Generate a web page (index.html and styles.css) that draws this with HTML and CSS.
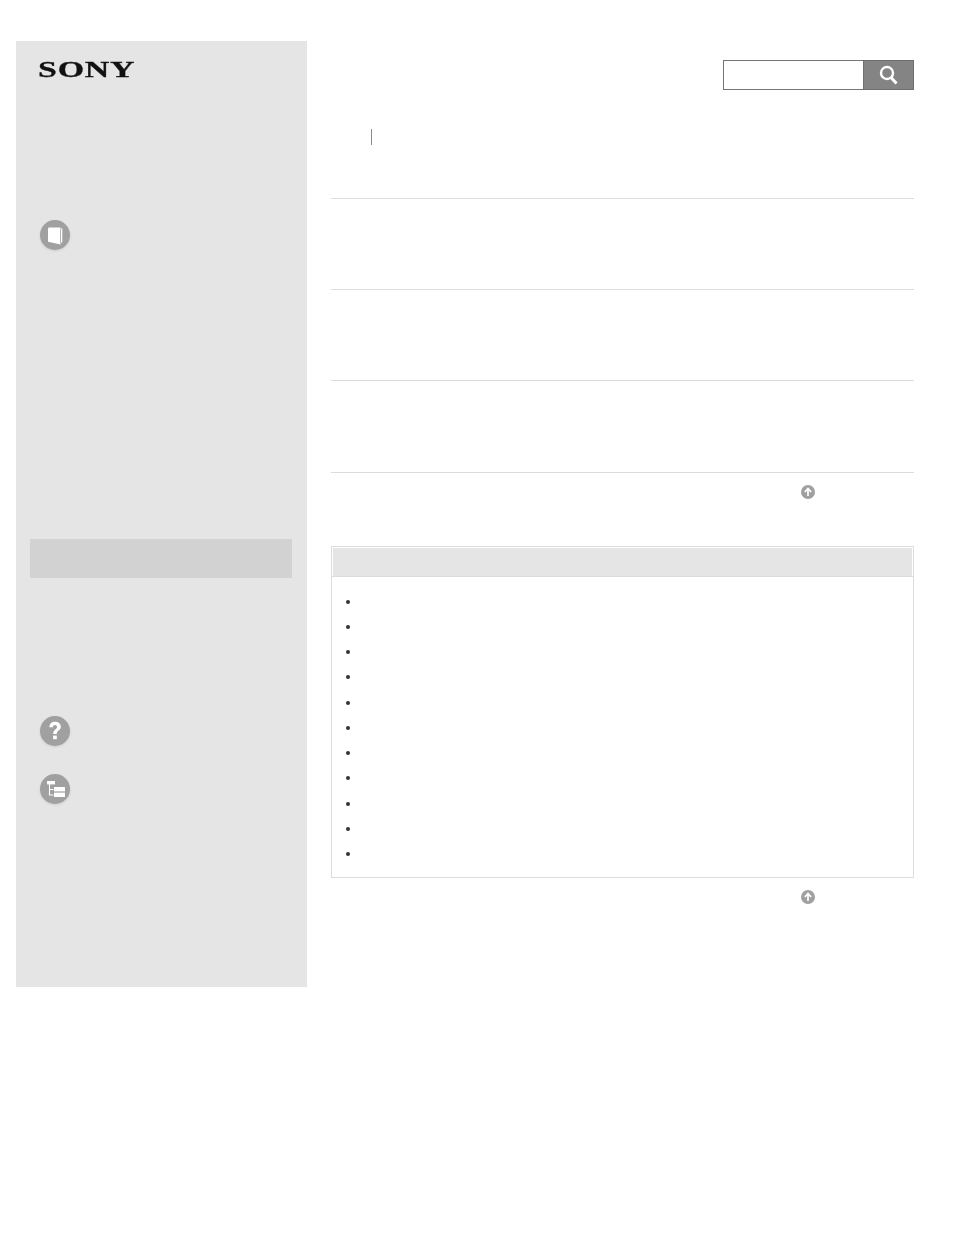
FILE: index.html
```html
<!DOCTYPE html>
<html lang="en">
<head>
<meta charset="utf-8">
<title>Sony Help Guide</title>
<link rel="stylesheet" href="styles.css">
</head>
<body>
<div class="page">
  <aside class="sidebar">
    <div class="logo">SONY</div>
    <div class="nav-icon icon-book">
      <svg viewBox="0 0 32 32" width="32" height="32"><circle cx="16" cy="16" r="15" fill="#a0a0a0"/><path d="M9 9.5 L9.8 8.4 L21.5 8.4 V9.6 H23.3 V23.6 H21.5 V25.4 L9 22.8 Z" fill="#fff"/><path d="M21.5 9.6 V23.6" stroke="#a0a0a0" stroke-width="0.8" fill="none"/></svg>
    </div>
    <div class="highlight"></div>
    <div class="nav-icon icon-help">
      <svg viewBox="0 0 32 32" width="32" height="32"><circle cx="16" cy="16" r="15" fill="#a0a0a0"/><path d="M10.4 12.2 C10.4 8.8 12.8 6.8 16 6.8 C19.4 6.8 21.8 8.8 21.8 11.8 C21.8 15.4 17.8 15.4 17.8 19 H14.2 C14.2 14.4 18 14.2 18 11.9 C18 10.7 17.2 10 16 10 C14.8 10 14 10.8 14 12.2 Z" fill="#fff"/><rect x="14.1" y="20.6" width="3.7" height="3.6" fill="#fff"/></svg>
    </div>
    <div class="nav-icon icon-tree">
      <svg viewBox="0 0 32 32" width="32" height="32"><circle cx="16" cy="16" r="15" fill="#a0a0a0"/><rect x="8" y="8" width="8" height="3.4" fill="#fff"/><path d="M10.5 11 V22 H14.5 M10.5 16.5 H14.5" stroke="#fff" stroke-width="1.1" fill="none"/><rect x="15" y="14" width="11" height="4.4" fill="#fff"/><rect x="15" y="19.6" width="11" height="4.4" fill="#fff"/></svg>
    </div>
  </aside>
  <main class="content">
    <div class="search">
      <div class="search-input"></div>
      <div class="search-button">
        <svg viewBox="0 0 20 20" width="20" height="20"><circle cx="8" cy="8" r="6" fill="none" stroke="#fff" stroke-width="2.4"/><path d="M12 12.5 L17.5 18.5" stroke="#fff" stroke-width="3" fill="none"/></svg>
      </div>
    </div>
    <div class="crumb"><span class="tick"></span></div>
    <div class="section first"></div>
    <div class="section"></div>
    <div class="section"></div>
    <div class="section last"></div>
    <div class="top-link top-link-a">
      <svg viewBox="0 0 14 14" width="14" height="14"><circle cx="7" cy="7" r="7" fill="#a0a0a0"/><path d="M7 11 V4 M3.8 7 L7 3.6 L10.2 7" stroke="#fff" stroke-width="1.7" fill="none"/></svg>
    </div>
    <section class="box">
      <div class="box-head"></div>
      <ul class="box-list">
        <li></li><li></li><li></li><li></li><li></li><li></li><li></li><li></li><li></li><li></li><li></li>
      </ul>
    </section>
    <div class="top-link top-link-b">
      <svg viewBox="0 0 14 14" width="14" height="14"><circle cx="7" cy="7" r="7" fill="#a0a0a0"/><path d="M7 11 V4 M3.8 7 L7 3.6 L10.2 7" stroke="#fff" stroke-width="1.7" fill="none"/></svg>
    </div>
  </main>
</div>
</body>
</html>
```

FILE: styles.css
```css
html, body {
  margin: 0;
  padding: 0;
  background: #fff;
}

.page {
  display: flex;
  align-items: flex-start;
  padding: 41px 40px 248px 16px;
}

.sidebar {
  width: 291px;
  height: 946px;
  flex: none;
  box-sizing: border-box;
  background: #e5e5e5;
  padding-top: 18px;
  display: flex;
  flex-direction: column;
}

.logo {
  margin-left: 22px;
  height: 22px;
  font-family: "Liberation Serif", serif;
  font-weight: 700;
  font-size: 25px;
  line-height: 22px;
  letter-spacing: 0.6px;
  color: #111;
  -webkit-text-stroke: 0.3px #111;
  transform: scaleX(1.355) scaleY(0.9);
  transform-origin: left center;
}

.nav-icon {
  margin-left: 23px;
  width: 32px;
  height: 32px;
  filter: drop-shadow(0 1px 1px rgba(0, 0, 0, 0.1));
}

.nav-icon svg {
  display: block;
}

.icon-book {
  margin-top: 138px;
}

.highlight {
  margin: 288px 15px 0 14px;
  height: 39px;
  background: #d2d2d2;
}

.icon-help {
  margin-top: 137px;
}

.icon-tree {
  margin-top: 26px;
}

.content {
  flex: 1;
  margin-left: 24px;
  padding-top: 19px;
}

.search {
  display: flex;
  justify-content: flex-end;
  height: 30px;
}

.search-input {
  width: 140px;
  box-sizing: border-box;
  border: 1px solid #757575;
  border-right: none;
  background: #fff;
}

.search-button {
  width: 51px;
  box-sizing: border-box;
  border: 1px solid #6f6f6f;
  background: #848484;
  display: flex;
  align-items: center;
  justify-content: center;
}

.crumb {
  height: 108px;
  padding-top: 39px;
  box-sizing: border-box;
  padding-left: 40px;
}

.tick {
  display: block;
  width: 1px;
  height: 16px;
  background: #8a8a8a;
}

.section {
  height: 91px;
  box-sizing: border-box;
  border-top: 1px solid #dcdcdc;
}

.section.last {
  height: 0;
  margin-top: 1px;
}

.top-link {
  display: flex;
  padding-left: 470px;
}

.top-link svg {
  display: block;
}

.top-link-a {
  margin-top: 12px;
}

.top-link-b {
  margin-top: 12px;
}

.box {
  margin-top: 47px;
  height: 332px;
  box-sizing: border-box;
  border: 1px solid #dcdcdc;
  padding: 1px;
}

.box-head {
  height: 28px;
  background: #e5e5e5;
}

.box-list {
  list-style: none;
  margin: 0 -1px;
  padding: 12px 0 0;
  border-top: 1px solid #dcdcdc;
}

.box-list li {
  height: 25.27px;
  padding-left: 14px;
  display: flex;
  align-items: center;
}

.box-list li::before {
  content: "";
  width: 4px;
  height: 4px;
  border-radius: 50%;
  background: #333;
}
```
